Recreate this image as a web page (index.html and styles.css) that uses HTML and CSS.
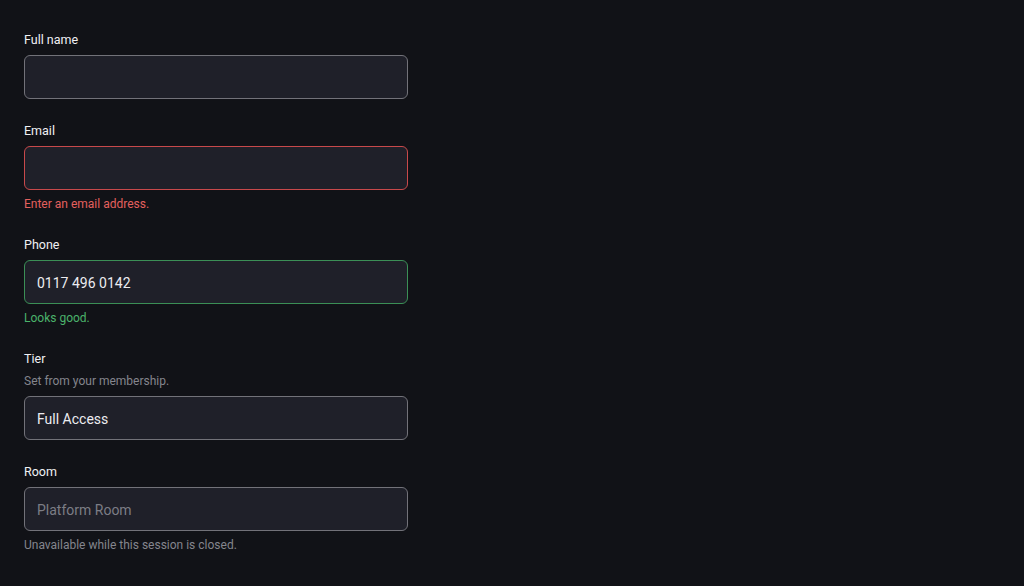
FILE: index.html
```html
<!DOCTYPE html>
<html lang="en">
<head>
<meta charset="utf-8">
<title>Form</title>
<link rel="stylesheet" href="styles.css">
</head>
<body>
<form class="form">
  <div class="field">
    <label class="label">Full name</label>
    <input class="input" type="text">
  </div>
  <div class="field">
    <label class="label">Email</label>
    <input class="input input-error" type="email">
    <p class="msg msg-error">Enter an email address.</p>
  </div>
  <div class="field">
    <label class="label">Phone</label>
    <input class="input input-ok" type="text" value="0117 496 0142">
    <p class="msg msg-ok">Looks good.</p>
  </div>
  <div class="field">
    <label class="label">Tier</label>
    <p class="hint">Set from your membership.</p>
    <input class="input" type="text" value="Full Access" readonly>
  </div>
  <div class="field">
    <label class="label">Room</label>
    <input class="input" type="text" placeholder="Platform Room" disabled>
    <p class="msg msg-muted">Unavailable while this session is closed.</p>
  </div>
</form>
</body>
</html>
```
FILE: styles.css
```css
* { box-sizing: border-box; }
html, body { margin: 0; padding: 0; }
body {
  background: #111217;
  color: #e8e8ec;
  font-family: Roboto, "Noto Sans", sans-serif;
}
.form {
  display: flex;
  flex-direction: column;
  gap: 24px;
  width: 384px;
  padding: 32px 0 0 24px;
  box-sizing: content-box;
}
.field {
  display: flex;
  flex-direction: column;
}
.label {
  font-size: 12.5px;
  line-height: 16px;
  font-weight: 400;
  color: #f0f0f4;
  margin-bottom: 7px;
}
.input {
  height: 44px;
  width: 384px;
  background: #1f2029;
  border: 1px solid #727279;
  border-radius: 6px;
  padding: 1px 12px 0;
  font-family: inherit;
  font-size: 14px;
  color: #ececf0;
  outline: none;
}
.input::placeholder { color: #7c7d85; }
.input:disabled { color: #7c7d85; }
.input-error { border-color: #c8494b; }
.input-ok { border-color: #3b8f56; }
.msg {
  margin: 5px 0 0;
  font-size: 12px;
  line-height: 18px;
}
.hint {
  margin: -1px 0 7px;
  font-size: 12px;
  line-height: 16px;
  color: #84858d;
}
.msg-error { color: #e4605e; }
.msg-ok { color: #4bb36b; }
.msg-muted { color: #84858d; }
```
